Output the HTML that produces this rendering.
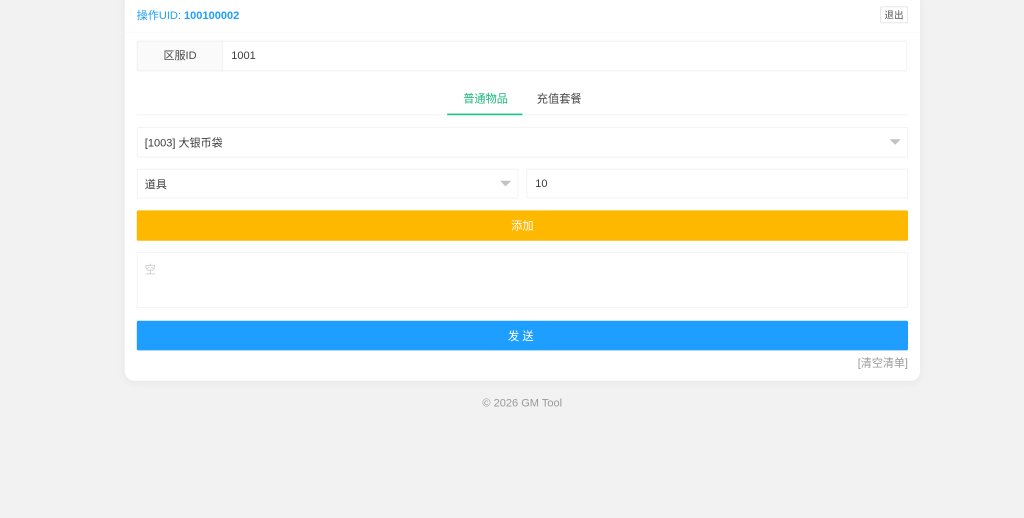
<!DOCTYPE html>
<html lang="zh-CN">
<head>
<meta charset="utf-8">
<title>GM Tool</title>
<style>
*{box-sizing:border-box;margin:0;padding:0}
html,body{width:1024px;height:518px;overflow:hidden;background:#f2f2f2;font-family:"Liberation Sans","Noto Sans CJK SC",sans-serif;color:#333}
#blur{position:absolute;left:0;top:0;width:1024px;height:518px;filter:blur(.35px);overflow:hidden}
#wrap{position:absolute;left:0;top:0;width:1280px;height:648px;transform:scale(.8);transform-origin:0 0;font-size:13.8px}
.abs{position:absolute}
#card{left:156px;top:-12px;width:994px;height:488px;background:#fff;border-radius:12px;box-shadow:0 2px 12px rgba(0,0,0,.05)}
.box{position:absolute;background:#fff;border:1px solid #f0f0f0;border-radius:2px;padding-left:9px;color:#3c3c3c}
.t{position:absolute;white-space:nowrap}
.arrow{position:absolute;width:0;height:0;border-left:7px solid transparent;border-right:7px solid transparent;border-top:7px solid #c2c2c2}
.btn{position:absolute;left:171px;width:964px;height:38px;text-align:center;color:#fff;border-radius:2px}
</style>
</head>
<body>
<div id="blur"><div id="wrap">
<div id="card" class="abs"></div>
<div class="abs" style="left:156px;top:40px;width:994px;height:1px;background:#fafafa"></div>

<div class="t" style="left:171px;top:10px;line-height:20px;color:#1e9fff">操作UID: <b>100100002</b></div>
<div class="abs" style="left:1100px;top:8px;width:35px;height:21px;border:1px solid #e2e2e2;border-radius:2px;font-size:12px;line-height:20px;text-align:center;color:#555">退出</div>

<div class="box" style="left:171px;top:51px;width:963px;height:38px;padding-left:117px;line-height:36px">1001</div>
<div class="abs" style="left:171px;top:51px;width:108px;height:38px;background:#fafafa;border:1px solid #f0f0f0;border-radius:2px 0 0 2px;line-height:36px;text-align:center;color:#4a4a4a">区服ID</div>

<div class="abs" style="left:171px;top:143px;width:964px;height:1px;background:#f3f3f3"></div>
<div class="abs" style="left:559px;top:142px;width:94px;height:2px;background:#16c784"></div>
<div class="t" style="left:579px;top:113px;line-height:20px;font-size:14px;color:#16b777">普通物品</div>
<div class="t" style="left:671px;top:113px;line-height:20px;font-size:14px;color:#4a4a4a">充值套餐</div>

<div class="box" style="left:171px;top:159px;width:964px;height:37.5px;line-height:38px">[1003] 大银币袋</div>
<div class="arrow" style="left:1112px;top:174px"></div>

<div class="box" style="left:171px;top:211px;width:477px;height:37px;line-height:38px">道具</div>
<div class="arrow" style="left:625px;top:226px"></div>
<div class="box" style="left:658px;top:211px;width:477px;height:37px;padding-left:10px;line-height:35px">10</div>

<div class="btn" style="top:263px;height:37.5px;background:#ffb800;line-height:39px;font-size:14px">添加</div>

<div class="box" style="left:171px;top:315px;width:964px;height:70px;color:#c8c8c8;line-height:42px;font-size:14px">空</div>

<div class="btn" style="top:401px;height:37px;background:#1e9fff;letter-spacing:4px;line-height:39px;font-size:14px">发送</div>

<div class="t" style="right:145px;top:444px;line-height:20px;color:#999">[清空清单]</div>
<div class="t" style="left:603px;top:494px;line-height:20px;color:#999">© 2026 GM Tool</div>
</div></div>
</body>
</html>
